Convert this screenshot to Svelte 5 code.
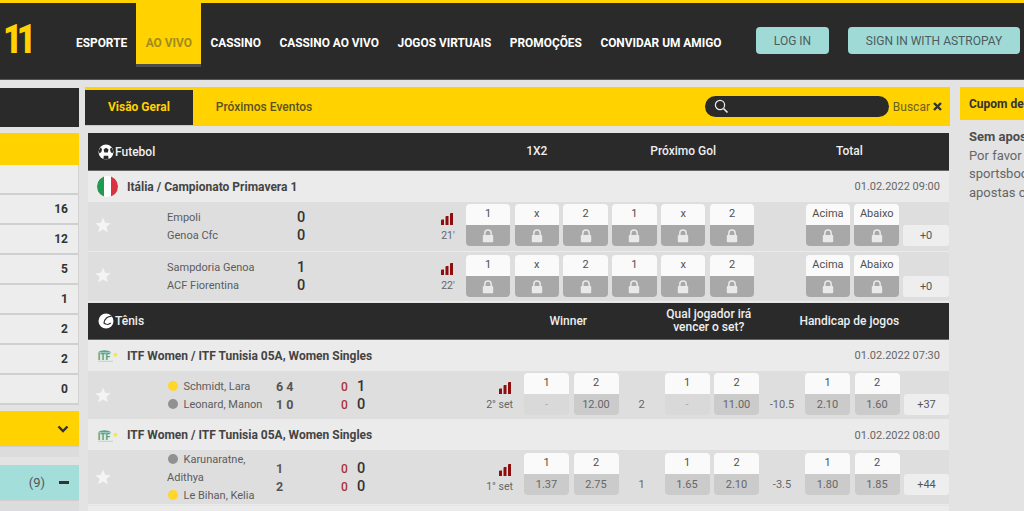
<script>
  const navItems = ["Esporte", "Ao Vivo", "Cassino", "Cassino ao Vivo", "Jogos Virtuais", "Promoções", "Convidar um Amigo"];
  const counts = ["", 16, 12, 5, 1, 2, 2, 0];

  const lockedFootball = [
    { label: "1" }, { label: "x" }, { label: "2" },
    { label: "1" }, { label: "x" }, { label: "2" },
    { gap: "" },
    { label: "Acima" }, { label: "Abaixo" }
  ];

  const odd = (label, value) => ({ label, value });

  const sports = [
    {
      name: "Futebol",
      icon: "ball",
      kind: "foot",
      columns: [
        { title: "1X2", cls: "col3" },
        { title: "Próximo Gol", cls: "col3" },
        { title: "Total", cls: "col2 far" }
      ],
      leagues: [
        {
          name: "Itália / Campionato Primavera 1",
          flag: "it",
          date: "01.02.2022 09:00",
          matches: [
            { teams: ["Empoli", "Genoa Cfc"], score: [0, 0], time: "21'", cells: lockedFootball, more: "+0" },
            { teams: ["Sampdoria Genoa", "ACF Fiorentina"], score: [1, 0], time: "22'", cells: lockedFootball, more: "+0" }
          ]
        }
      ]
    },
    {
      name: "Tênis",
      icon: "tennis",
      kind: "net",
      columns: [
        { title: "Winner", cls: "col2" },
        { title: "Qual jogador irá vencer o set?", cls: "col2 far" },
        { title: "Handicap de jogos", cls: "col2 far solo" }
      ],
      leagues: [
        {
          name: "ITF Women / ITF Tunisia 05A, Women Singles",
          flag: "itf",
          date: "01.02.2022 07:30",
          matches: [
            {
              players: [{ name: "Schmidt, Lara", serve: true }, { name: "Leonard, Manon" }],
              sets: ["6 4", "1 0"], points: [0, 0], score: [1, 0], time: "2° set",
              cells: [odd("1", "-"), odd("2", "12.00"), { gap: "2" }, odd("1", "-"), odd("2", "11.00"), { gap: "-10.5" }, odd("1", "2.10"), odd("2", "1.60")],
              more: "+37"
            }
          ]
        },
        {
          name: "ITF Women / ITF Tunisia 05A, Women Singles",
          flag: "itf",
          date: "01.02.2022 08:00",
          matches: [
            {
              players: [{ name: "Karunaratne, Adithya" }, { name: "Le Bihan, Kelia", serve: true }],
              sets: ["1", "2"], points: [0, 0], score: [0, 0], time: "1° set",
              cells: [odd("1", "1.37"), odd("2", "2.75"), { gap: "1" }, odd("1", "1.65"), odd("2", "2.10"), { gap: "-3.5" }, odd("1", "1.80"), odd("2", "1.85")],
              more: "+44"
            }
          ]
        }
      ]
    }
  ];
</script>

<div class="app">
  <header class="topbar">
    <div class="logo"><span>11</span></div>
    <nav class="nav">
      {#each navItems as item}
        <a href="#top" class="nav-item" class:active={item === "Ao Vivo"}>{item}</a>
      {/each}
    </nav>
    <button class="teal login">LOG IN</button>
    <button class="teal astropay">SIGN IN WITH ASTROPAY</button>
  </header>

  <div class="page">
    <aside class="side">
      <div class="side-dark"></div>
      <div class="side-yellow"></div>
      <ul class="side-list">
        {#each counts as n}
          <li>{n}</li>
        {/each}
      </ul>
      <div class="side-toggle yellow">
        <svg width="12" height="8" viewBox="0 0 12 8"><path d="M1.5 1.5 6 6l4.5-4.5" fill="none" stroke="#333" stroke-width="2.4" /></svg>
      </div>
      <div class="side-foot"></div>
      <div class="side-toggle teal-bar">
        <span>(9)</span>
        <i class="minus"></i>
      </div>
      <div class="side-foot"></div>
    </aside>

    <main class="main">
      <div class="tabs">
        <a href="#top" class="tab current">Visão Geral</a>
        <a href="#top" class="tab">Próximos Eventos</a>
        <div class="search">
          <svg width="15" height="15" viewBox="0 0 15 15"><circle cx="6" cy="6" r="4.6" fill="none" stroke="#eee" stroke-width="1.2" /><path d="M9.5 9.5 13.5 13.5" stroke="#eee" stroke-width="1.6" /></svg>
        </div>
        <span class="buscar">Buscar</span>
        <svg class="close" width="9" height="9" viewBox="0 0 9 9"><path d="M1 1l7 7M8 1 1 8" stroke="#333" stroke-width="2.4" /></svg>
      </div>

      <div class="events">
        {#each sports as sport}
          <section class="sport {sport.kind}">
            <div class="sport-head">
              {#if sport.icon === "ball"}
                <svg class="sport-icon" viewBox="0 0 16 16">
                  <circle cx="8" cy="8" r="7.5" fill="#fff" />
                  <path d="M5.6 5.4 8 3.8l2.6 1.6-.8 3H6.4z" fill="#2a2a2a" />
                  <path d="M.8 6.4 2.6 3.6 4 5 3.4 8 1.4 9.4zM15.2 6.4 13.4 3.6 12 5l.6 3 2 1.4zM5.4 15l.4-3.2 4.4 0 .4 3.2-2.6.6z" fill="#2a2a2a" />
                </svg>
              {:else}
                <svg class="sport-icon" viewBox="0 0 16 16">
                  <circle cx="8" cy="8" r="7.5" fill="#fff" />
                  <path d="M13.6 3.4C9.8 3 6.4 5.8 6 10c1.6 1.6 4.6 1.8 6.8 0" fill="none" stroke="#2a2a2a" stroke-width="1.2" />
                </svg>
              {/if}
              <span class="sport-name">{sport.name}</span>
              <div class="sport-cols">
                {#each sport.columns as col}
                  <span class="sport-col {col.cls}">{col.title}</span>
                {/each}
                <span class="sport-col last"></span>
              </div>
            </div>

            {#each sport.leagues as league}
              <div class="league">
                {#if league.flag === "it"}
                  <svg class="flag" viewBox="0 0 21 21">
                    <clipPath id="round"><circle cx="10.5" cy="10.5" r="10.5" /></clipPath>
                    <g clip-path="url(#round)">
                      <rect width="7" height="21" fill="#1f9a4f" />
                      <rect x="7" width="7" height="21" fill="#fff" />
                      <rect x="14" width="7" height="21" fill="#d9333f" />
                    </g>
                  </svg>
                {:else}
                  <svg class="flag itf" viewBox="0 0 21 13">
                    <path d="M.5 3.600C5 .6 10 .6 14.500 3.600z" fill="#4fa88a" />
                    <text x=".8" y="10.800" class="itf-text">ITF</text>
                    <path d="M1 12.300h15" stroke="#9ccfbe" stroke-width=".7" />
                    <circle cx="18.400" cy="5.800" r="2" fill="#ffe34d" />
                  </svg>
                {/if}
                <span class="league-name">{league.name}</span>
                <span class="league-date">{league.date}</span>
              </div>

              {#each league.matches as match}
                <div class="match" class:tall={match.players?.[0].name.length > 18}>
                  <svg class="star" viewBox="0 0 16 16"><path d="M8 .6l2.2 5.1 5.5.5-4.2 3.6 1.3 5.4L8 12.4l-4.8 2.8 1.3-5.4L.3 6.200l5.5-.5z" fill="#f4f4f4" /></svg>

                  {#if match.players}
                    <div class="players">
                      {#each match.players as p}
                        <div class="player"><i class="dot" class:serve={p.serve}></i>{p.name}</div>
                      {/each}
                    </div>
                    <div class="sets">{#each match.sets as s}<div>{s}</div>{/each}</div>
                    <div class="points">{#each match.points as s}<div>{s}</div>{/each}</div>
                    <div class="score">{#each match.score as s}<div>{s}</div>{/each}</div>
                  {:else}
                    <div class="teams">{#each match.teams as t}<div>{t}</div>{/each}</div>
                    <div class="score">{#each match.score as s}<div>{s}</div>{/each}</div>
                  {/if}

                  <div class="live">
                    <svg class="signal" width="12" height="12" viewBox="0 0 12 12">
                      <path d="M0 7.500q0-1 1-1h2v5.500H0zM4.500 4q0-1 1-1h2v9h-3zM9 1q0-1 1-1h2v12H9z" fill="#8f0d0d" />
                    </svg>
                    <span>{match.time}</span>
                  </div>

                  <div class="cells">
                    {#each match.cells as cell}
                      {#if cell.label}
                        <div class="odd">
                          <div class="odd-label">{cell.label}</div>
                          {#if cell.value === undefined}
                            <div class="odd-value locked">
                              <svg width="12" height="14" viewBox="0 0 12 14">
                                <path d="M2.800 6V4.200a3.200 3.200 0 0 1 6.400 0V6" fill="none" stroke="#e9e9e9" stroke-width="1.500" />
                                <rect x=".8" y="6" width="10.400" height="7.200" rx=".8" fill="#e9e9e9" />
                              </svg>
                            </div>
                          {:else}
                            <div class="odd-value" class:off={cell.value === "-"}>{cell.value}</div>
                          {/if}
                        </div>
                      {:else}
                        <div class="handicap">{cell.gap}</div>
                      {/if}
                    {/each}
                    <div class="more">{match.more}</div>
                  </div>
                </div>
              {/each}
            {/each}
          </section>
        {/each}
        <div class="league next"></div>
      </div>
    </main>

    <aside class="slip">
      <div class="slip-head">Cupom de apostas</div>
      <div class="slip-body">
        <strong>Sem apostas selecionadas</strong>
        <p>Por favor selecione as odds</p>
        <p>sportsbook para fazer suas</p>
        <p>apostas com a gente</p>
      </div>
    </aside>
  </div>
</div>

<style>
  :global(body) {
    margin: 0;
    background: #e3e3e3;
  }
  .app {
    height: 511px;
    overflow: hidden;
    font-family: Roboto, "Liberation Sans", sans-serif;
    color: #555;
    font-size: 11px;
  }

  .topbar {
    display: flex;
    align-items: flex-start;
    height: 76px;
    border-top: 3px solid #ffd200;
    border-bottom: 1px solid #555;
    background: #2a2a2a;
  }
  .logo {
    width: 67px;
    padding: 12px 0 0 3px;
    box-sizing: border-box;
    color: #ffd200;
    font-size: 41px;
    line-height: 48px;
    font-weight: 900;
    letter-spacing: -7px;
  }
  .logo span {
    display: block;
    transform: scaleX(0.82);
    transform-origin: left;
  }
  .nav {
    display: flex;
    width: 677px;
    margin-left: -0.250px;
  }
  .nav-item {
    height: 61px;
    padding: 0 9.250px;
    line-height: 80px;
    font-weight: 700;
    font-size: 11.900px;
    color: #fff;
    text-decoration: none;
    text-transform: uppercase;
    white-space: nowrap;
  }
  .nav-item.active {
    background: #ffd200;
    border-bottom: 3px solid #4d4d4d;
    color: #a08c1e;
  }
  .teal {
    margin-top: 24px;
    height: 27px;
    padding: 0;
    border: 0;
    border-radius: 4px;
    background: #9fdad7;
    color: #4d5c5c;
    font: 400 12px Roboto, sans-serif;
  }
  .login {
    width: 73px;
    margin-right: 19px;
    margin-left: 12.250px;
  }
  .astropay {
    width: 172px;
  }

  .page {
    display: flex;
    align-items: flex-start;
    width: 1024px;
    overflow: hidden;
  }

  .side {
    flex: none;
    width: 79px;
    padding-top: 8px;
  }
  .side-dark {
    height: 39px;
    background: #2a2a2a;
  }
  .side-yellow {
    height: 32px;
    margin-top: 6px;
    background: #ffd200;
  }
  .side-list {
    margin: 0;
    padding: 0;
    list-style: none;
  }
  .side-list li {
    box-sizing: border-box;
    height: 30px;
    padding-right: 10px;
    border-right: 1px solid #d2d2d2;
    border-bottom: 2px solid #d0d0d0;
    background: #ededed;
    color: #333;
    font-weight: 700;
    font-size: 12px;
    line-height: 29px;
    text-align: right;
  }
  .side-toggle {
    display: flex;
    align-items: center;
    justify-content: flex-end;
    height: 35px;
    padding-right: 10px;
  }
  .side-toggle.yellow {
    margin-top: 6px;
    background: #ffd200;
  }
  .teal-bar {
    margin-top: 8px;
    background: #a3dedb;
    color: #555;
    font-size: 13px;
  }
  .minus {
    width: 10px;
    height: 2.500px;
    margin-left: 14px;
    background: #333;
  }
  .side-foot {
    height: 11px;
    background: #dcdcdc;
    border-top: 1px solid #d0d0d0;
    box-sizing: border-box;
  }

  .main {
    flex: none;
    width: 865px;
    margin-left: 6px;
    padding-top: 7px;
  }
  .tabs {
    display: flex;
    align-items: center;
    height: 39px;
    background: #ffd200;
    font-size: 12px;
  }
  .tab {
    align-self: flex-end;
    height: 35px;
    margin-bottom: 1px;
    line-height: 35px;
    padding: 0 23px;
    color: #5b5220;
    font-weight: 500;
    text-decoration: none;
  }
  .tab.current {
    padding: 0 23px;
    background: #2a2a2a;
    color: #ffd200;
    font-weight: 700;
  }
  .search {
    display: flex;
    align-items: center;
    box-sizing: border-box;
    width: 184px;
    height: 21px;
    margin-left: auto;
    padding-left: 9px;
    border-radius: 11px;
    background: #2a2a2a;
  }
  .buscar {
    margin-left: 4px;
    color: #6b6020;
    font-size: 12px;
  }
  .close {
    margin: 0 8px 0 3px;
  }

  .events {
    margin: 7px 1px 0 3px;
  }
  .sport {
    margin-bottom: 1px;
    --cell: 44.600px;
    --gap: 4.200px;
    --spacer: 43px;
    --more: 45.800px;
  }
  .sport.net {
    --cell: 45px;
    --gap: 4.500px;
    --spacer: 37px;
    --more: 45px;
  }
  .sport-head {
    display: flex;
    align-items: center;
    height: 37px;
    border-bottom: 1px solid #666;
    background: #2a2a2a;
    color: #eee;
  }
  .net .sport-head {
    height: 36px;
  }
  .sport-icon {
    flex: none;
    width: 16px;
    height: 16px;
    margin: 0 1px 0 10px;
  }
  .sport-name {
    font-size: 12px;
    font-weight: 500;
    color: #f0f0f0;
  }
  .sport-cols {
    display: flex;
    align-items: center;
    margin-left: auto;
    gap: var(--gap);
    text-align: center;
    font-size: 12px;
    font-weight: 500;
    line-height: 13px;
  }
  .col3 {
    width: calc(var(--cell) * 3 + var(--gap) * 2);
  }
  .col2 {
    display: flex;
    justify-content: center;
    box-sizing: border-box;
    width: calc(var(--cell) * 2 + var(--gap));
    padding-right: 6px;
  }
  .far {
    margin-left: calc(var(--spacer) + var(--gap));
  }
  .solo {
    white-space: nowrap;
  }
  .last {
    width: var(--more);
  }

  .league {
    display: flex;
    align-items: center;
    height: 31px;
    background: #ebebeb;
  }
  .match + .league {
    height: 30px;
  }
  .flag {
    flex: none;
    width: 21px;
    height: 21px;
    margin: 0 9px;
  }
  .flag.itf {
    height: 13px;
  }
  .itf-text {
    font: 900 8.500px Roboto, sans-serif;
    fill: #4fa88a;
  }
  .league-name {
    color: #444;
    font-weight: 700;
    font-size: 12px;
  }
  .league-date {
    margin-left: auto;
    padding-right: 9px;
    color: #666;
    font-size: 11px;
  }
  .next {
    margin-top: 1px;
  }

  .match {
    display: flex;
    align-items: center;
    box-sizing: border-box;
    height: 50px;
    border-bottom: 1px solid #ebebeb;
    background: #dedede;
    line-height: 18px;
  }
  .net .match {
    height: 49px;
    padding-top: 2px;
  }
  .net .match.tall {
    height: 55px;
    padding-top: 2px;
  }
  .star {
    flex: none;
    width: 16px;
    height: 16px;
    margin: -3px 56px 0 7px;
  }
  .teams {
    width: 130px;
    color: #5c5c5c;
  }
  .score {
    width: 20px;
    color: #333;
    font-size: 14.500px;
    font-weight: 500;
  }
  .players {
    width: 109px;
    color: #5c5c5c;
  }
  .dot {
    display: inline-block;
    width: 10px;
    height: 10px;
    margin: 0 6px 0 0.500px;
    border-radius: 50%;
    background: #919191;
    vertical-align: -1px;
  }
  .dot.serve {
    background: #ffd629;
  }
  .sets {
    width: 65px;
    font-weight: 700;
    font-size: 12.500px;
  }
  .points {
    width: 16px;
    color: #a33;
    font-size: 12px;
    font-weight: 500;
  }
  .live {
    display: flex;
    flex-direction: column;
    align-items: flex-end;
    margin-left: auto;
    margin-top: 1px;
    font-size: 10.500px;
    line-height: 13px;
    color: #666;
  }
  .signal {
    margin: 0 2px 4px 0;
  }
  .cells {
    display: flex;
    align-self: flex-start;
    gap: var(--gap);
    margin: 2px 0 0 11px;
    text-align: center;
  }
  .net .cells {
    margin-top: 0;
  }
  .net .tall .cells {
    margin-top: 1px;
  }
  .match + .match .cells {
    margin-top: 3px;
  }
  .odd {
    width: var(--cell);
  }
  .odd-label {
    height: 21px;
    border-radius: 4px 4px 0 0;
    background: #fafafa;
    line-height: 20px;
    color: #4f4f4f;
  }
  .odd-value {
    display: flex;
    align-items: center;
    justify-content: center;
    height: 21px;
    border-radius: 0 0 4px 4px;
    background: #cbcbcb;
    color: #666;
  }
  .odd-value.locked {
    background: #a8a8a8;
  }
  .odd-value.off {
    background: #d9d9d9;
    color: #aaa;
  }
  .handicap {
    width: var(--spacer);
    align-self: flex-end;
    line-height: 21px;
    color: #666;
  }
  .more {
    width: var(--more);
    height: 21px;
    align-self: flex-end;
    border-radius: 3px;
    background: #eee;
    line-height: 22px;
    color: #555;
  }

  .slip {
    flex: none;
    width: 300px;
    margin-left: 10px;
    padding-top: 7px;
  }
  .slip-head {
    height: 33px;
    padding-left: 9px;
    background: #ffd200;
    color: #333;
    font-weight: 700;
    font-size: 12px;
    line-height: 35px;
  }
  .slip-body {
    padding: 8px 0 0 9px;
    font-size: 13px;
    line-height: 18.500px;
    white-space: nowrap;
    color: #666;
  }
  .slip-body strong {
    color: #4d4d4d;
  }
  .slip-body p {
    margin: 0;
  }
</style>
